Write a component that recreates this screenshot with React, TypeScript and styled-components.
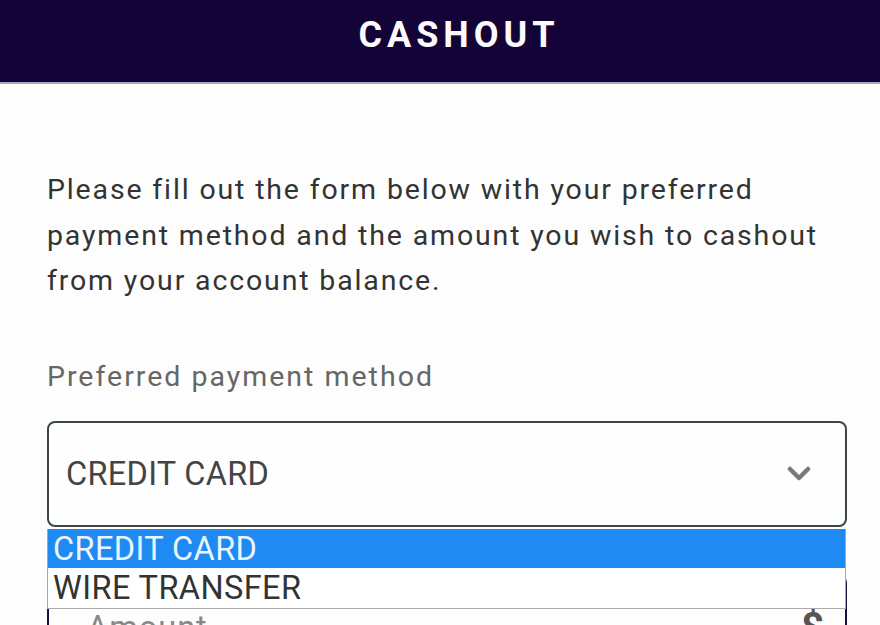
import React from 'react';
import styled, { createGlobalStyle } from 'styled-components';

const GlobalStyle = createGlobalStyle`
  html, body {
    margin: 0;
    padding: 0;
    background: #fdfdfd;
    font-family: Roboto, 'Liberation Sans', sans-serif;
  }
`;

const Header = styled.header`
  height: 84px;
  background: #140336;
  border-bottom: 2px solid #aaa4bc;
  box-sizing: border-box;
  display: flex;
  align-items: center;
  justify-content: center;
  padding: 0 0 12px 38px;

  h1 {
    margin: 0;
    color: #fbfbfd;
    font-size: 36px;
    font-weight: 700;
    letter-spacing: 5px;
  }
`;

const Content = styled.main`
  padding: 83px 33px 0 47px;
`;

const Intro = styled.p`
  margin: 0;
  font-size: 28.5px;
  line-height: 45.5px;
  letter-spacing: 1.85px;
  color: #333;
`;

const Label = styled.label`
  display: block;
  margin-top: 56px;
  font-size: 28.5px;
  line-height: 34px;
  letter-spacing: 2px;
  color: #666;
`;

const SelectWrap = styled.div`
  position: relative;
  margin-top: 27px;
`;

const SelectBox = styled.div`
  height: 106px;
  box-sizing: border-box;
  border: 2px solid #3c4a3e;
  border-radius: 8px;
  background: #fefefe;
  display: flex;
  align-items: center;
  justify-content: space-between;
  padding: 0 34px 0 17px;
  font-size: 32.5px;
  letter-spacing: 0.3px;
  color: #444;
`;

const Options = styled.ul`
  position: absolute;
  top: calc(100% + 2px);
  left: 0;
  right: 1px;
  margin: 0;
  padding: 0;
  list-style: none;
  background: #fff;
  border: 1px solid #aaa;
  border-top: none;
  z-index: 2;
`;

const Option = styled.li<{ $active?: boolean }>`
  height: 39.5px;
  line-height: 40px;
  padding-left: 5px;
  font-size: 32.5px;
  letter-spacing: 0.4px;
  background: ${(p) => (p.$active ? '#1f8bf2' : '#fff')};
  color: ${(p) => (p.$active ? '#eaf5ff' : '#333')};
`;

const AmountBox = styled.div`
  margin-top: 48px;
  height: 106px;
  box-sizing: border-box;
  border: 2px solid #1b1242;
  border-radius: 8px;
  display: flex;
  align-items: center;
  justify-content: space-between;
  padding: 0 20px 0 38px;
  font-size: 32.5px;
  letter-spacing: 1px;
  color: #888;

  span.currency {
    font-size: 40px;
    font-weight: 700;
    color: #555;
  }
`;

const Chevron = () => (
  <svg width="24" height="16" viewBox="0 0 24 16">
    <path d="M3 3 L12 12 L21 3" fill="none" stroke="#7a7a7a" strokeWidth="4.5" strokeLinecap="round" strokeLinejoin="round" />
  </svg>
);

export default function App() {
  return (
    <>
      <GlobalStyle />
      <Header>
        <h1>CASHOUT</h1>
      </Header>
      <Content>
        <Intro>
          Please fill out the form below with your preferred payment method and the amount you wish to cashout
          from your account balance.
        </Intro>
        <Label>Preferred payment method</Label>
        <SelectWrap>
          <SelectBox>
            <span>CREDIT CARD</span>
            <Chevron />
          </SelectBox>
          <Options>
            <Option $active>CREDIT CARD</Option>
            <Option>WIRE TRANSFER</Option>
          </Options>
        </SelectWrap>
        <AmountBox>
          <span>Amount</span>
          <span className="currency">$</span>
        </AmountBox>
      </Content>
    </>
  );
}
